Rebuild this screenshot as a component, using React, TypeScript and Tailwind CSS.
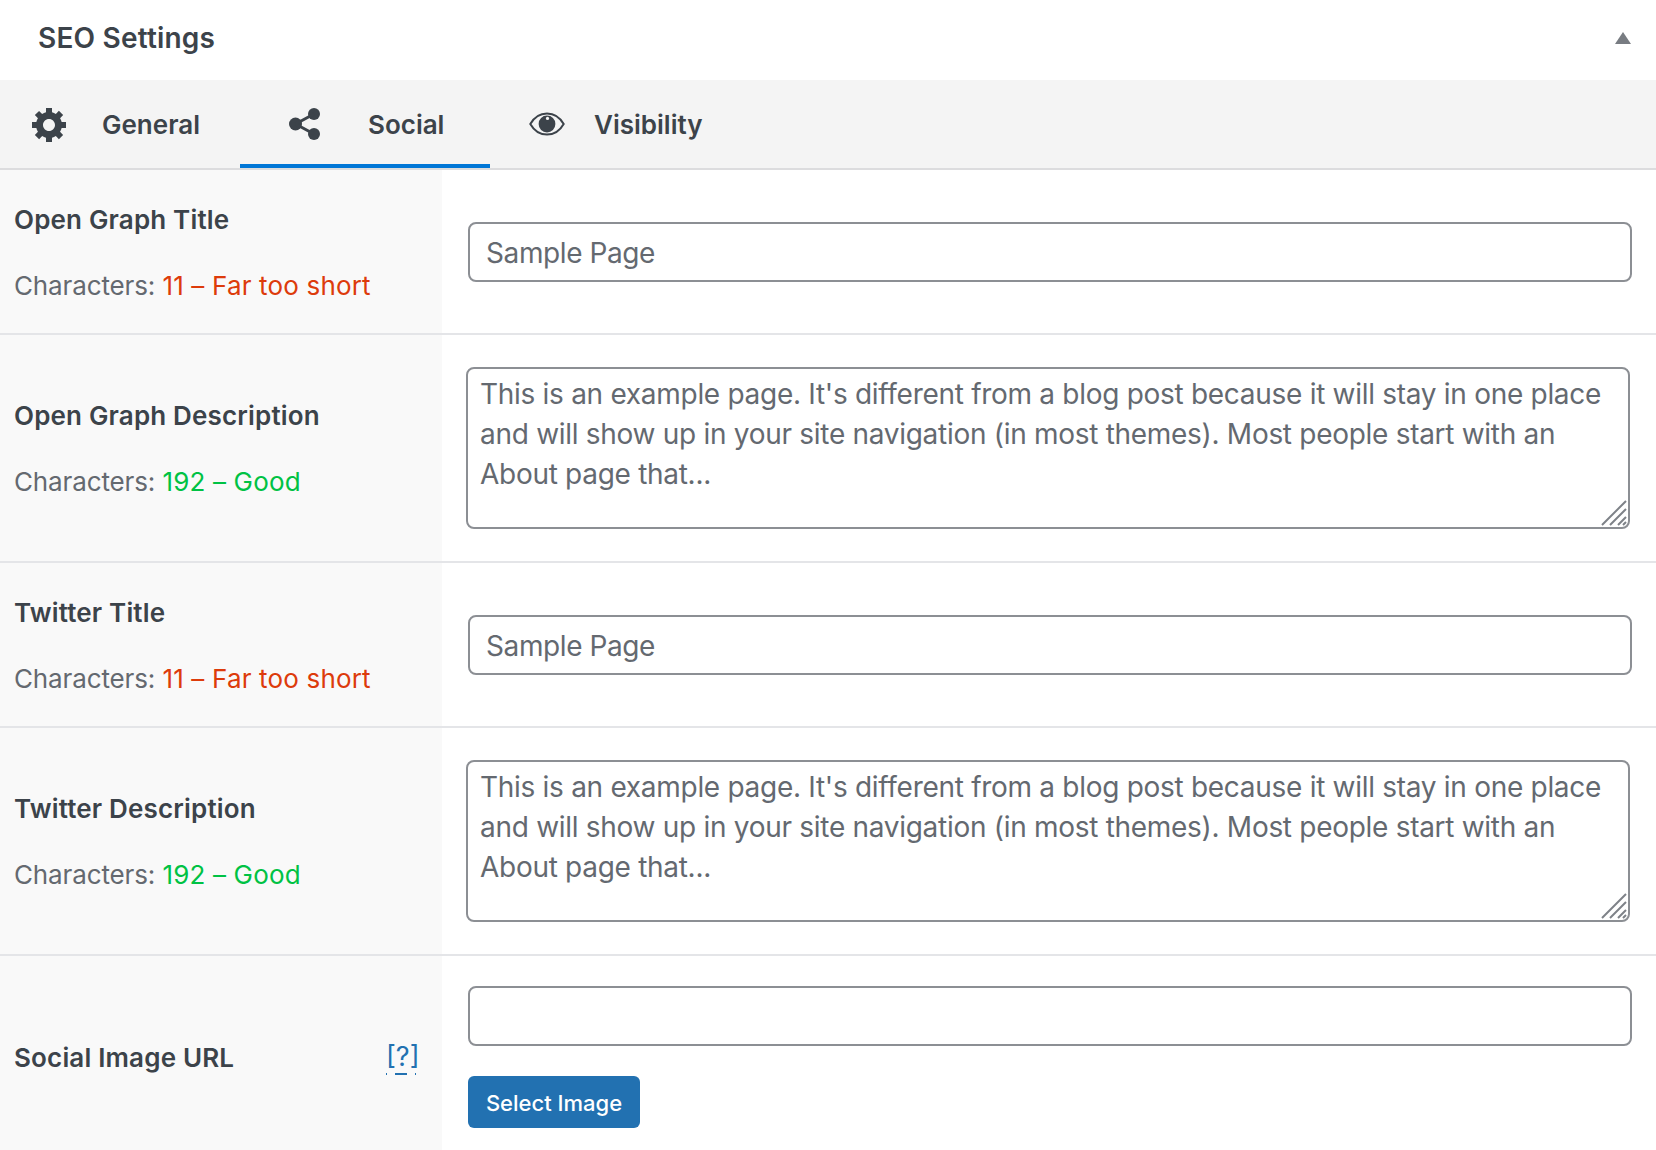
import React from "react";

const DESC =
  "This is an example page. It's different from a blog post because it will stay in one place and will show up in your site navigation (in most themes). Most people start with an About page that...";

function Gear() {
  return (
    <svg width="40" height="40" viewBox="0 0 20 20" fill="#3c434a">
      <path d="M18 12h-2.18c-.17.7-.44 1.35-.81 1.93l1.54 1.54-2.1 2.1-1.54-1.54c-.58.36-1.23.63-1.91.79V19H8v-2.18c-.68-.16-1.33-.43-1.91-.79l-1.54 1.54-2.12-2.12 1.54-1.54c-.36-.58-.63-1.23-.79-1.91H1V9.03h2.17c.16-.7.44-1.35.8-1.94L2.43 5.55l2.1-2.1 1.54 1.54c.58-.37 1.24-.64 1.93-.81V2h3v2.18c.68.16 1.33.43 1.91.79l1.54-1.54 2.12 2.12-1.54 1.54c.36.59.64 1.24.8 1.94H18V12zm-8.5 1.5c1.66 0 3-1.34 3-3s-1.34-3-3-3-3 1.34-3 3 1.34 3 3 3z" />
    </svg>
  );
}

function Share() {
  return (
    <svg width="32" height="32" viewBox="0 0 32 32" fill="#3c434a">
      <circle cx="25" cy="6" r="6" />
      <circle cx="25" cy="26" r="6" />
      <circle cx="6.5" cy="16" r="6.5" />
      <path d="M6.5 16 25 6M6.5 16 25 26" stroke="#3c434a" strokeWidth="3" />
    </svg>
  );
}

function Eye() {
  return (
    <svg width="36" height="24" viewBox="0 0 36 24">
      <path
        d="M1.3 12C5 5.5 11 1.4 18 1.4S31 5.5 34.7 12C31 18.5 25 22.6 18 22.6S5 18.5 1.3 12Z"
        fill="none"
        stroke="#3c434a"
        strokeWidth="2"
      />
      <circle cx="18" cy="12" r="8.4" fill="#3c434a" />
      <circle cx="18.5" cy="6.4" r="1.6" fill="#f4f4f4" />
    </svg>
  );
}

function Grip() {
  return (
    <svg width="26" height="26" viewBox="0 0 26 26" stroke="#7e8288" strokeWidth="2" className="absolute right-[3px] bottom-[3px]">
      <path d="M1 25 25 1M9 25 25 9M17 25l8-8M22 25l3-3" />
    </svg>
  );
}

function Counter({ value, bad }: { value: string; bad?: boolean }) {
  return (
    <div className="text-[26px] leading-[32px] tracking-[-0.13px] text-[#646970]">
      Characters:{" "}
      <span className={`tracking-[0.17px] ${bad ? "text-[#dd3b0b]" : "text-[#00c244]"}`}>{value}</span>
    </div>
  );
}

function Row({
  label,
  count,
  bad,
  h,
  children,
}: {
  label: string;
  count: string;
  bad?: boolean;
  h: string;
  children: React.ReactNode;
}) {
  return (
    <div className={`flex border-b-2 border-[#e4e5e8] ${h}`}>
      <div className="flex w-[442px] shrink-0 flex-col justify-center gap-[34px] bg-[#f9f9f9] pl-[14px] pt-[2px]">
        <div className="text-[26px] leading-[32px] font-semibold tracking-[0.17px] text-[#3c434a]">{label}</div>
        <Counter value={count} bad={bad} />
      </div>
      <div className="flex flex-1 items-center">{children}</div>
    </div>
  );
}

function TextInput({ value }: { value?: string }) {
  return (
    <input
      readOnly
      defaultValue={value}
      className="ml-[26px] h-[60px] w-[1164px] rounded-[8px] border-2 border-[#8c8f94] bg-white px-[16px] pt-[3px] text-[28px] tracking-[-0.4px] text-[#646970] outline-none"
    />
  );
}

function Area() {
  return (
    <div className="relative ml-[24px] h-[162px] w-[1164px]">
      <textarea
        readOnly
        defaultValue={DESC}
        className="block h-full w-full resize-none overflow-hidden rounded-[8px] border-2 border-[#8c8f94] bg-white px-[12px] py-[5px] text-[28px] leading-[40px] tracking-[-0.29px] text-[#646970] outline-none"
      />
      <Grip />
    </div>
  );
}

export default function App() {
  return (
    <div className="h-[1150px] w-[1656px] overflow-hidden bg-white font-['Inter',sans-serif]">
      <div className="flex h-[80px] items-center justify-between pl-[38px] pr-[25px]">
        <h2 className="pb-[5px] text-[28px] font-semibold tracking-[0.2px] text-[#3c434a]">SEO Settings</h2>
        <div className="mb-[5px] h-0 w-0 border-x-[8px] border-b-[12px] border-x-transparent border-b-[#787c82]" />
      </div>

      <div className="flex h-[90px] border-b-2 border-[#dcdcde] bg-[#f4f4f4] text-[26px] font-semibold text-[#3c434a]">
        <div className="flex w-[240px] items-center pl-[30px]">
          <Gear />
          <span className="pl-[32px]">General</span>
        </div>
        <div className="flex w-[250px] items-center border-b-4 border-[#0076d6] pt-[4px] pl-[49px]">
          <Share />
          <span className="pl-[47px]">Social</span>
        </div>
        <div className="flex items-center pl-[39px]">
          <Eye />
          <span className="pl-[29px]">Visibility</span>
        </div>
      </div>

      <Row label="Open Graph Title" count="11 – Far too short" bad h="h-[165px]">
        <TextInput value="Sample Page" />
      </Row>
      <Row label="Open Graph Description" count="192 – Good" h="h-[228px]">
        <Area />
      </Row>
      <Row label="Twitter Title" count="11 – Far too short" bad h="h-[165px]">
        <TextInput value="Sample Page" />
      </Row>
      <Row label="Twitter Description" count="192 – Good" h="h-[228px]">
        <Area />
      </Row>

      <div className="flex h-[194px]">
        <div className="flex w-[442px] shrink-0 items-center justify-between bg-[#f9f9f9] pl-[14px] pr-[26px] pt-[10px]">
          <div className="text-[26px] leading-[32px] font-semibold tracking-[0.17px] text-[#3c434a]">Social Image URL</div>
          <a className="flex w-[30px] flex-col text-center text-[27px] leading-[32px] text-[#2271b1]">
            <span>[?]</span>
            <span className="flex h-[2px] justify-between">
              <i className="w-[1px] bg-[#2271b1]" />
              <i className="w-[12px] bg-[#2271b1]" />
              <i className="w-[1px] bg-[#2271b1]" />
            </span>
          </a>
        </div>
        <div className="flex flex-col items-start gap-[30px] pt-[30px]">
          <TextInput />
          <button className="ml-[26px] h-[52px] w-[172px] rounded-[6px] bg-[#2271b1] pt-[3px] text-[22px] font-medium text-white">
            Select Image
          </button>
        </div>
      </div>
    </div>
  );
}
